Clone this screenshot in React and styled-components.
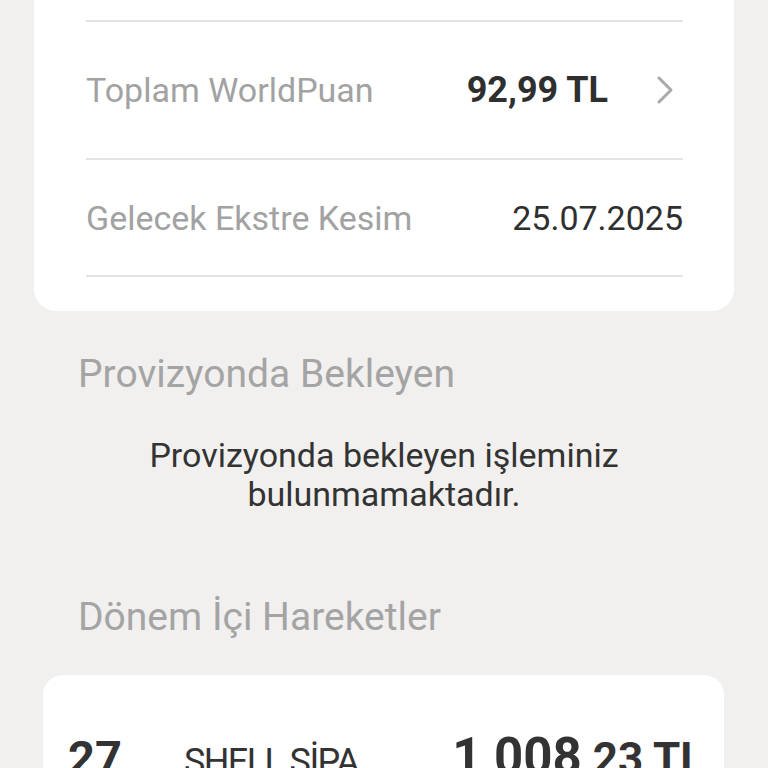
import React from 'react'
import styled, { createGlobalStyle } from 'styled-components'

const GlobalStyle = createGlobalStyle`
  html, body {
    margin: 0;
    padding: 0;
    background-color: #f1f0ef;
    font-family: Roboto, "Noto Sans", Arial, sans-serif;
  }
  * {
    box-sizing: border-box;
  }
`

const Page = styled.div`
  width: 768px;
  height: 768px;
  overflow: hidden;
  background-color: #f1f0ef;
  display: flex;
  flex-direction: column;
`

const SummaryCard = styled.div`
  margin: 0 34px;
  background-color: #ffffff;
  border-radius: 0 0 22px 22px;
  padding: 20px 51px 34px 52px;
`

const Divider = styled.div`
  height: 2px;
  background-color: #e3e3e3;
`

const InfoRow = styled.div`
  height: ${props => props.height}px;
  display: flex;
  align-items: center;
  justify-content: space-between;
`

const Label = styled.span`
  font-size: 34px;
  color: #a2a2a2;
`

const Value = styled.span`
  font-size: ${props => props.bold ? 36 : 34}px;
  color: #2f2f2f;
  font-weight: ${props => props.bold ? 700 : 400};
`

const ValueGroup = styled.div`
  display: flex;
  align-items: center;
  .chevron {
    margin-left: 48px;
    margin-right: 7px;
  }
`

const SectionTitle = styled.h2`
  margin: ${props => props.top}px 0 0 78px;
  font-size: 39px;
  line-height: 46px;
  font-weight: 400;
  color: #a4a4a4;
`

const EmptyMessage = styled.p`
  margin: 39px 0 0;
  font-size: 34px;
  line-height: 39px;
  color: #333333;
  text-align: center;
`

const TransactionCard = styled.div`
  margin: 35px 44px 0 43px;
  background-color: #ffffff;
  border-radius: 20px;
  padding: 52px 20px 0 25px;
  flex: 1;
`

const TransactionRow = styled.div`
  display: flex;
  align-items: baseline;
  .day {
    width: 116px;
    font-size: 47px;
    font-weight: 700;
    color: #333333;
  }
  .merchant {
    flex: 1;
    font-size: 36px;
    color: #333333;
    letter-spacing: -1.6px;
  }
  .amount {
    color: #333333;
    font-weight: 700;
    .main {
      font-size: 51px;
    }
    .rest {
      font-size: 44px;
    }
  }
`

const Chevron = () => (
  <svg className="chevron" width="20" height="30" viewBox="0 0 20 30">
    <polyline points="3,3 15,15 3,27" fill="none" stroke="#a9a9a9" strokeWidth="3" strokeLinecap="round" strokeLinejoin="round" />
  </svg>
)

const App = () => {
  return (
    <>
      <GlobalStyle />
      <Page>
        <SummaryCard>
          <Divider />
          <InfoRow height={136}>
            <Label>Toplam WorldPuan</Label>
            <ValueGroup>
              <Value bold>92,99 TL</Value>
              <Chevron />
            </ValueGroup>
          </InfoRow>
          <Divider />
          <InfoRow height={115}>
            <Label>Gelecek Ekstre Kesim</Label>
            <Value>25.07.2025</Value>
          </InfoRow>
          <Divider />
        </SummaryCard>
        <SectionTitle top={40}>Provizyonda Bekleyen</SectionTitle>
        <EmptyMessage>
          Provizyonda bekleyen işleminiz<br />bulunmamaktadır.
        </EmptyMessage>
        <SectionTitle top={80}>Dönem İçi Hareketler</SectionTitle>
        <TransactionCard>
          <TransactionRow>
            <span className="day">27</span>
            <span className="merchant">SHELL SİPA...</span>
            <span className="amount">
              <span className="main">1,008</span>
              <span className="rest">,23 TL</span>
            </span>
          </TransactionRow>
        </TransactionCard>
      </Page>
    </>
  )
}

export default App
